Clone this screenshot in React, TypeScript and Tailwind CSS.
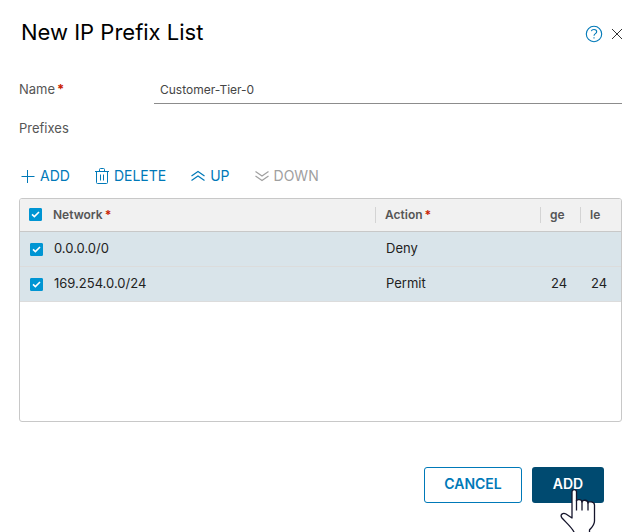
import { useState } from "react";
import type { ReactNode } from "react";

type Prefix = { network: string; action: string; ge: string; le: string };

const prefixes: Prefix[] = [
  { network: "0.0.0.0/0", action: "Deny", ge: "", le: "" },
  { network: "169.254.0.0/24", action: "Permit", ge: "24", le: "24" },
];

function Required() {
  return <span className="ml-0.5 font-bold text-[#c92100]">*</span>;
}

function Checkbox({ label, checked, onChange }: { label: string; checked: boolean; onChange: () => void }) {
  return (
    <span className="grid size-[13px] place-items-center">
      <input
        type="checkbox"
        aria-label={label}
        checked={checked}
        onChange={onChange}
        className="col-start-1 row-start-1 size-[13px] appearance-none rounded-[1px] border border-[#8c8c8c] bg-white checked:border-[#0095d3] checked:bg-[#0095d3]"
      />
      {checked && (
        <svg viewBox="0 0 13 13" className="pointer-events-none col-start-1 row-start-1 size-[13px]" fill="none" stroke="#fff" strokeWidth="1.6">
          <path d="M3 6.3 5.4 8.6 10 4" />
        </svg>
      )}
    </span>
  );
}

function ToolButton({ icon, disabled, children }: { icon: ReactNode; disabled?: boolean; children: ReactNode }) {
  return (
    <button
      type="button"
      disabled={disabled}
      className="flex items-center gap-[5px] text-sm leading-5 text-[#0079b8] disabled:text-[#a0a0a0]"
    >
      {icon}
      {children}
    </button>
  );
}

function HeadCell({ className, children }: { className: string; children: ReactNode }) {
  return (
    <th scope="col" className={`p-0 text-left font-semibold ${className}`}>
      <div className="h-4 border-l border-[#d4d4d4] pl-[9px] leading-4">{children}</div>
    </th>
  );
}

function HandCursor() {
  return (
    <svg viewBox="0 0 36 46" className="pointer-events-none absolute top-[21px] left-[28px] h-[46px] w-9" fill="#fff" stroke="#14142b" strokeWidth="1.3" strokeLinejoin="round">
      <path d="M12 30V3.800c0-3 4.500-3 4.500 0V13c0-2 5.500-2 5.500 1 0-2.500 6-2.500 6 1 0-2 6.500-1.500 6.500 2v16c0 4-2.500 6-5 9v6H14v-4C11.500 39 5.500 34 2 30c-2.500-3.500 1-5.500 4-4z" />
      <path d="M16.500 12v10.500M22 13v9.500M28 14.500v8" />
    </svg>
  );
}

export default function App() {
  const [selected, setSelected] = useState([true, true]);
  const all = selected.every(Boolean);

  return (
    <main className="min-h-screen overflow-hidden bg-white pt-5 pr-[3px] pb-7 pl-[19px] font-['Inter','Liberation_Sans',sans-serif] text-[13px] text-[#565656]">
      <header className="flex items-center justify-between">
        <h1 className="pl-0.5 text-[22px] leading-6 font-normal text-black">New IP Prefix List</h1>
        <div className="flex items-center gap-[9px] pt-1">
          <button type="button" aria-label="Help" className="text-[#0079b8]">
            <svg viewBox="0 0 18 18" className="block size-[18px]" fill="none" stroke="currentColor" strokeWidth="1.1">
              <circle cx="9" cy="9" r="7.700" />
              <path d="M6.300 6.200C6.700 4.900 7.900 4.500 9 4.500c1.700 0 2.700.9 2.700 2.200 0 1.900-2.700 1.900-2.700 4" />
              <path d="M9 12.200v1.200" />
            </svg>
          </button>
          <button type="button" aria-label="Close" className="text-[#333]">
            <svg viewBox="0 0 10 10" className="block size-2.5" fill="none" stroke="currentColor">
              <path d="m0 0 10 10M10 0 0 10" />
            </svg>
          </button>
        </div>
      </header>

      <div className="mt-8 flex h-7 items-center">
        <label htmlFor="prefix-name" className="w-[135px] shrink-0">
          Name
          <Required />
        </label>
        <input
          id="prefix-name"
          defaultValue="Customer-Tier-0"
          className="h-7 min-w-0 flex-1 border-b border-[#8c8c8c] px-1.5 text-xs text-[#454545] outline-none"
        />
      </div>
      <h2 className="mt-3.5 text-[13px] leading-5 font-normal">Prefixes</h2>

      <div className="mt-7 flex h-5 items-center gap-[25px]">
        <ToolButton
          icon={
            <svg viewBox="0 0 16 18" className="h-[18px] w-4" fill="none" stroke="currentColor">
              <path d="M2.500 9.500h13M8.500 3v13" />
            </svg>
          }
        >
          ADD
        </ToolButton>
        <ToolButton
          icon={
            <svg viewBox="0 0 14 18" className="h-[18px] w-3.5" fill="none" stroke="currentColor">
              <path d="M0 4.500h14M4.500 4V2.500q0-1 1-1h3q1 0 1 1V4M1.500 4.500v11q0 1 1 1h9q1 0 1-1v-11M5.500 7.500v6M8.500 7.500v6" />
            </svg>
          }
        >
          DELETE
        </ToolButton>
        <ToolButton
          icon={
            <svg viewBox="0 0 14 14" className="size-3.5" fill="none" stroke="currentColor" strokeWidth="1.2">
              <path d="m.5 7 6.500-4.500L13.500 7M.5 11.500 7 7l6.500 4.500" />
            </svg>
          }
        >
          UP
        </ToolButton>
        <ToolButton
          disabled
          icon={
            <svg viewBox="0 0 14 14" className="size-3.5" fill="none" stroke="currentColor" strokeWidth="1.2">
              <path d="M.5 2.500 7 7l6.500-4.500M.5 7 7 11.500 13.500 7" />
            </svg>
          }
        >
          DOWN
        </ToolButton>
      </div>

      <div className="mt-3 h-56 overflow-hidden rounded-[3px] border border-[#c8c8c8]">
        <table className="w-full table-fixed border-collapse">
          <thead>
            <tr className="h-8 border-b border-[#c8c8c8] bg-[#f1f1f1] text-xs">
              <th scope="col" className="w-[33px] p-0 pl-[9px]">
                <Checkbox label="Select all prefixes" checked={all} onChange={() => setSelected([!all, !all])} />
              </th>
              <th scope="col" className="p-0 text-left font-semibold">
                Network
                <Required />
              </th>
              <HeadCell className="w-[165px]">
                Action
                <Required />
              </HeadCell>
              <HeadCell className="w-10">ge</HeadCell>
              <HeadCell className="w-[41px]">le</HeadCell>
            </tr>
          </thead>
          <tbody className="text-[#222]">
            {prefixes.map((p, i) => (
              <tr key={p.network} className="h-[35px] border-b border-[#dcdcdc] bg-[#d9e4ea]">
                <td className="p-0 pt-0.5 pl-2.5">
                  <Checkbox
                    label={`Select ${p.network}`}
                    checked={selected[i]}
                    onChange={() => setSelected(selected.map((s, j) => (j === i ? !s : s)))}
                  />
                </td>
                <td className="p-0 pl-px">{p.network}</td>
                <td className="p-0 pl-[11px]">{p.action}</td>
                <td className="p-0 pl-[11px]">{p.ge}</td>
                <td className="p-0 pl-[11px]">{p.le}</td>
              </tr>
            ))}
          </tbody>
        </table>
      </div>

      <footer className="mt-[45px] flex justify-end gap-2.5 pr-[18px] text-sm font-semibold">
        <button type="button" className="h-9 w-[98px] rounded-[3px] border border-[#0079b8] pb-0.5 text-[#0079b8]">
          CANCEL
        </button>
        <div className="relative">
          <button type="button" className="h-9 w-[72px] rounded-[3px] bg-[#004a70] pb-0.5 text-white">
            ADD
          </button>
          <HandCursor />
        </div>
      </footer>
    </main>
  );
}
